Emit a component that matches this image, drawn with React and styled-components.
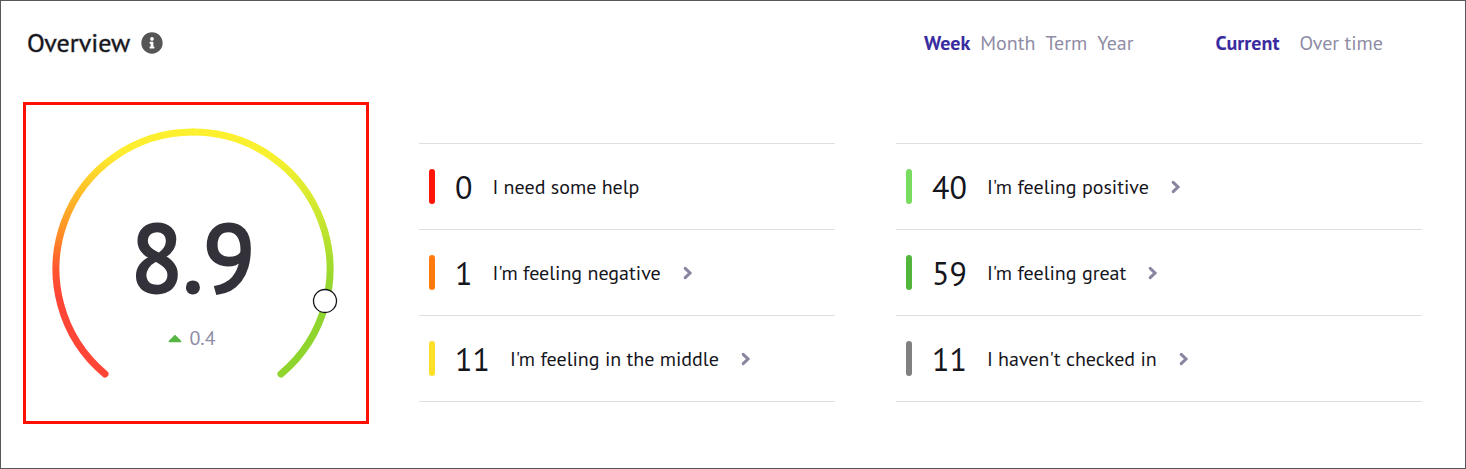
import React from 'react'
import styled, { createGlobalStyle } from 'styled-components'
import { FaInfoCircle, FaCaretUp } from 'react-icons/fa'

const leftMoods = [
    { count: 0, label: 'I need some help', color: '#ff1408' },
    { count: 1, label: "I'm feeling negative", color: '#ff7a0d', link: true },
    { count: 11, label: "I'm feeling in the middle", color: '#fee029', link: true },
]

const rightMoods = [
    { count: 40, label: "I'm feeling positive", color: '#78dc60', link: true },
    { count: 59, label: "I'm feeling great", color: '#52b53c', link: true },
    { count: 11, label: "I haven't checked in", color: '#808080', link: true },
]

function Chevron() {
    return (
        <ChevronIcon viewBox="0 0 10 14" aria-hidden="true">
            <path d="M2.2 2.4 L7 7 L2.2 11.6" />
        </ChevronIcon>
    )
}

function MoodList({ moods }) {
    return (
        <List>
            {moods.map((mood) => (
                <Row key={mood.label}>
                    <Bar $color={mood.color} />
                    <Count>{mood.count}</Count>
                    {mood.link ? (
                        <MoodLink href="#">
                            {mood.label}
                            <Chevron />
                        </MoodLink>
                    ) : (
                        <MoodText>{mood.label}</MoodText>
                    )}
                </Row>
            ))}
        </List>
    )
}

function Gauge() {
    return (
        <GaugeBox>
            <Dial viewBox="0 0 340 316" aria-hidden="true">
                <defs>
                    <linearGradient id="low" gradientUnits="userSpaceOnUse" x1="0" y1="27" x2="0" y2="190">
                        <stop offset="0" stopColor="#fdf02f" />
                        <stop offset="0.14" stopColor="#fdec2f" />
                        <stop offset="0.36" stopColor="#fec128" />
                        <stop offset="0.64" stopColor="#ff8a27" />
                        <stop offset="0.84" stopColor="#ff5630" />
                        <stop offset="1" stopColor="#ff4636" />
                    </linearGradient>
                    <linearGradient id="high" gradientUnits="userSpaceOnUse" x1="0" y1="27" x2="0" y2="190">
                        <stop offset="0" stopColor="#fdf02f" />
                        <stop offset="0.16" stopColor="#f6f02f" />
                        <stop offset="0.5" stopColor="#cce72f" />
                        <stop offset="0.8" stopColor="#a5dc2d" />
                        <stop offset="1" stopColor="#8fd52d" />
                    </linearGradient>
                </defs>
                <Arc d="M79 269 A137 137 0 0 1 167 27" stroke="url(#low)" />
                <Arc d="M255 269 A137 137 0 0 0 167 27" stroke="url(#high)" />
                <circle cx="299" cy="196" r="11.5" fill="#fff" stroke="#15151c" strokeWidth="1.3" />
            </Dial>
            <Reading>
                <Score>8.9</Score>
                <Change>
                    <FaCaretUp color="#57b545" size={22} />
                    0.4
                </Change>
            </Reading>
        </GaugeBox>
    )
}

function App() {
    return (
        <Page>
            <GlobalStyle />
            <Header>
                <Title>Overview</Title>
                <InfoButton aria-label="About the overview">
                    <FaInfoCircle size={22} />
                </InfoButton>
                <Periods>
                    <Tab $active>Week</Tab>
                    <Tab>Month</Tab>
                    <Tab>Term</Tab>
                    <Tab>Year</Tab>
                </Periods>
                <Views>
                    <Tab $active>Current</Tab>
                    <Tab>Over time</Tab>
                </Views>
            </Header>
            <Content>
                <Gauge />
                <MoodList moods={leftMoods} />
                <MoodList moods={rightMoods} />
            </Content>
        </Page>
    )
}

const GlobalStyle = createGlobalStyle`
    body {
        margin: 0;
        background: #fff;
        color: #15151c;
        font-family: "PT Sans", "Noto Sans", sans-serif;
    }
`

const Page = styled.main`
    box-sizing: border-box;
    min-height: 100vh;
    border: 1px solid #58585b;
    padding: 20px 43px 44px 22px;
`

const Header = styled.header`
    display: flex;
    align-items: center;
    height: 44px;
    padding: 0 39px 0 4px;
`

const Title = styled.h1`
    margin: 0;
    font-size: 26px;
    font-weight: 400;
    line-height: 32px;
    -webkit-text-stroke: 1px rgba(21, 21, 28, 0.4);
`

const InfoButton = styled.button`
    display: flex;
    margin-left: 11px;
    padding: 0;
    border: 0;
    background: none;
    color: #555;
    cursor: pointer;
`

const Periods = styled.nav`
    display: flex;
    gap: 10px;
    margin-left: auto;
`

const Views = styled.nav`
    display: flex;
    gap: 20px;
    margin-left: 82px;
`

const Tab = styled.button`
    padding: 0;
    border: 0;
    background: none;
    font-family: inherit;
    font-size: 20px;
    line-height: 28px;
    font-weight: ${(props) => (props.$active ? 600 : 400)};
    color: ${(props) => (props.$active ? '#3a2ca0' : '#8f8ca6')};
    cursor: pointer;
`

const Content = styled.div`
    display: grid;
    grid-template-columns: 346px 466fr 587fr;
    align-items: start;
    margin-top: 37px;
`

const GaugeBox = styled.section`
    display: grid;
    border: 3px solid #ff1005;

    > * {
        grid-area: 1 / 1;
    }
`

const Dial = styled.svg`
    display: block;
    width: 100%;
`

const Arc = styled.path`
    fill: none;
    stroke-width: 7;
    stroke-linecap: round;
`

const Reading = styled.div`
    display: flex;
    flex-direction: column;
    align-items: center;
    padding: 100px 6px 0 0;
`

const Score = styled.div`
    font-size: 95px;
    font-weight: 400;
    line-height: 104px;
    color: #33323a;
    -webkit-text-stroke: 3px #33323a;
`

const Change = styled.div`
    display: flex;
    align-items: center;
    gap: 3px;
    margin: 15px 6px 0 0;
    font-size: 20px;
    line-height: 28px;
    color: #8f8ca6;
`

const List = styled.ul`
    margin: 41px 0 0 50px;
    padding: 0;
    list-style: none;
    border-top: 1px solid #dfdfe1;

    & + & {
        margin-left: 61px;
    }
`

const Row = styled.li`
    display: flex;
    align-items: center;
    height: 85px;
    padding-left: 10px;
    border-bottom: 1px solid #dfdfe1;
`

const Bar = styled.span`
    width: 6px;
    height: 35px;
    border-radius: 3px;
    background: ${(props) => props.$color};
`

const Count = styled.span`
    margin: 0 20px;
    font-size: 32px;
    line-height: 38px;
`

const MoodText = styled.span`
    font-size: 20px;
    line-height: 28px;
`

const MoodLink = styled.a`
    display: flex;
    align-items: center;
    gap: 22px;
    font-size: 20px;
    line-height: 28px;
    color: inherit;
    text-decoration: none;
`

const ChevronIcon = styled.svg`
    width: 10px;
    height: 14px;
    fill: none;
    stroke: #8985a0;
    stroke-width: 3;
    stroke-linecap: round;
`

export default App
